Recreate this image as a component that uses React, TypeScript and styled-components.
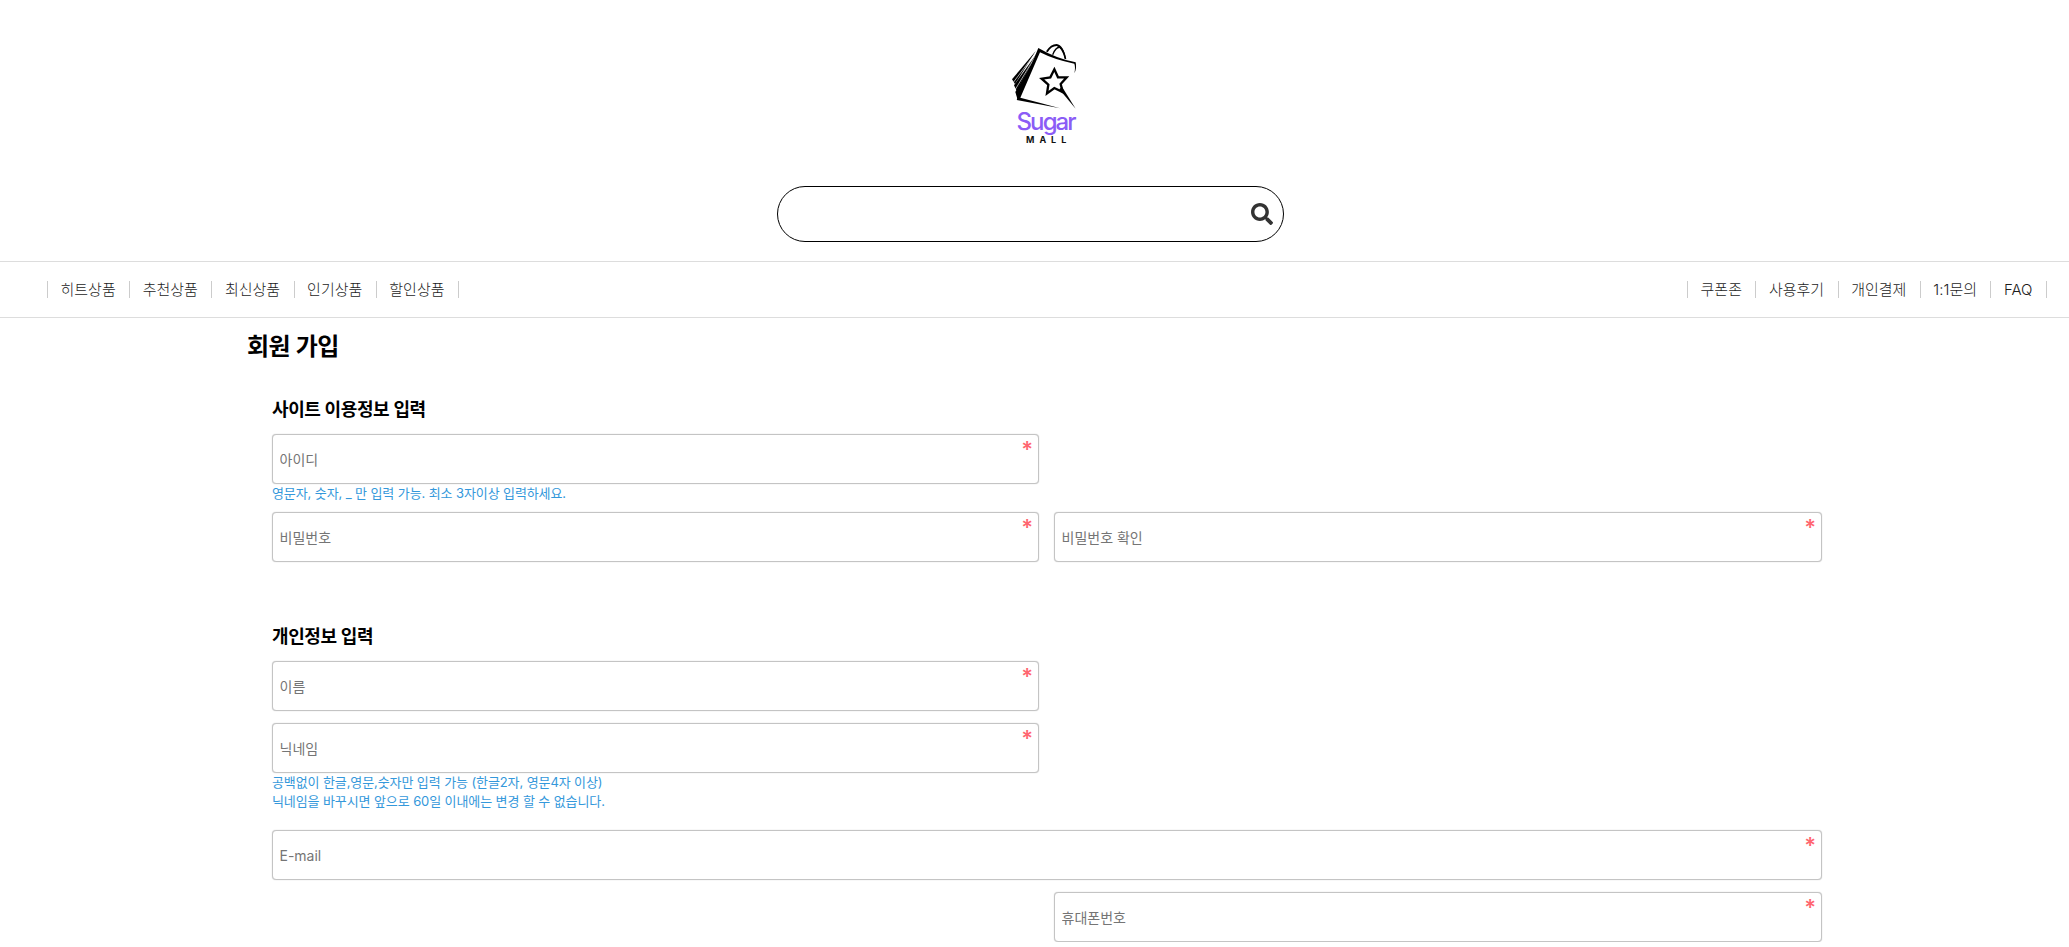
import styled, { createGlobalStyle } from "styled-components";
import { FaSearch } from "react-icons/fa";

const GlobalStyle = createGlobalStyle`
  html, body {
    margin: 0;
    padding: 0;
    background: #fff;
    font-family: "Inter", "Noto Sans CJK KR", sans-serif;
    color: #333;
  }
  * {
    box-sizing: border-box;
  }
`;

const Header = styled.header`
  padding-top: 38px;
  display: flex;
  flex-direction: column;
  align-items: center;
`;

const LogoImage = styled.svg`
  display: block;
  width: 121px;
  height: 110px;
`;

const SearchBox = styled.div`
  width: 507px;
  height: 56px;
  margin: 38px 8px 19px 0;
  padding: 0 10px 0 20px;
  border: 1px solid #000;
  border-radius: 28px;
  display: flex;
  align-items: center;
`;

const SearchInput = styled.input`
  flex: 1;
  min-width: 0;
  height: 100%;
  border: none;
  outline: none;
  font: inherit;
  background: transparent;
`;

const SearchButton = styled.button`
  padding: 0;
  border: none;
  background: none;
  color: #333;
  display: flex;
  cursor: pointer;
`;

const Nav = styled.nav`
  height: 57px;
  padding: 0 22px 0 47px;
  border-top: 1px solid #ddd;
  border-bottom: 1px solid #ddd;
  display: flex;
  justify-content: space-between;
  align-items: center;
`;

const NavGroup = styled.ul`
  margin: 0;
  padding: 0;
  list-style: none;
  display: flex;
  border-left: 1px solid #ccc;
`;

const NavItem = styled.li`
  height: 17px;
  padding: 0 13.5px 0 12.5px;
  border-right: 1px solid #ccc;
  font-size: 15px;
  font-weight: 300;
  line-height: 17px;
  color: #1c1c1c;
  white-space: nowrap;
`;

const Main = styled.main`
  width: 1575px;
  margin: 0 auto;
  padding-top: 11px;
`;

const Title = styled.h1`
  margin: 0 0 32px;
  font-size: 24px;
  line-height: 36px;
  font-weight: 600;
  letter-spacing: -0.5px;
  color: #000;
`;

const Section = styled.section<{ $gap?: number }>`
  padding-left: 25px;
  margin-bottom: ${(p) => p.$gap ?? 0}px;
`;

const SectionTitle = styled.h2`
  margin: 0 0 12px;
  padding-top: 1px;
  font-size: 18px;
  line-height: 24px;
  font-weight: 600;
  letter-spacing: -0.4px;
  color: #000;
`;

const FormGrid = styled.div`
  display: grid;
  grid-template-columns: 767px 1fr;
  column-gap: 15px;
`;

const Field = styled.div<{ $wide?: boolean; $second?: boolean; $gap?: number }>`
  position: relative;
  grid-column: ${(p) => (p.$wide ? "1 / span 2" : p.$second ? "2" : "auto")};
  margin-bottom: ${(p) => p.$gap ?? 12}px;
`;

const TextInput = styled.input`
  display: block;
  width: 100%;
  height: 50px;
  padding: 0 6px 0 6.5px;
  border: 1px solid #c4c4c4;
  border-radius: 4px;
  box-shadow: 0 0 1px #bbb;
  outline: none;
  font-family: inherit;
  font-size: 14px;
  color: #333;

  &::placeholder {
    color: #757575;
    opacity: 1;
  }
`;

const RequiredMark = styled.span`
  position: absolute;
  top: 4px;
  right: 6px;
  font-size: 22px;
  font-weight: 600;
  line-height: 22px;
  color: #ff6670;
`;

const Hint = styled.div`
  font-size: 13px;
  line-height: 19px;
  letter-spacing: -0.1px;
  color: #3498db;
`;

const Logo = () => (
  <LogoImage viewBox="0 0 121 110">
    {/* paths are in 3x crop coordinates of the bag, hence the scale */}
    <g transform="translate(-14 -18) scale(0.33333)">
      <path d="M228 92 L156 178 L165 192 Z" fill="#000" />
      <path d="M232 98 L162 196 L170 212 Z" fill="#000" />
      <path d="M238 90 L166 216 L173 240 Z" fill="#000" />
      <path d="M233 90 L161 186 M236 92 L166 208" stroke="#fff" strokeWidth="2" />
      <path
        d="M235 84 Q290 116 347 127 Q351 145 343 160 Q347 142 343 131 Q285 120 240 97 L181 233 Q240 248 300 265 Q235 252 170 240 Z"
        fill="#000"
      />
      <path
        d="M258 94 Q272 72 290 72 Q310 74 319 118 L314 116 Q306 84 290 78 Q274 78 263 97 Z"
        fill="#000"
      />
      <path
        d="M278 104 Q288 80 300 82 Q312 90 316 116"
        fill="none"
        stroke="#000"
        strokeWidth="4"
      />
      <path
        d="M283 148 L294 172 L320 172 L302 192 L308 216 L283 204 L261 220 L265 194 L245 176 L271 172 Z"
        fill="none"
        stroke="#000"
        strokeWidth="7"
        strokeLinejoin="miter"
      />
      <path d="M298 208 L306 200 L347 266 Z" fill="#000" />
    </g>
    <text
      x="42.5"
      y="92"
      fontFamily="Inter, sans-serif"
      fontSize="24"
      fontWeight="500"
      letterSpacing="-1.9"
      fill="#8b5cf6"
    >
      Sugar
    </text>
    <text
      x="52"
      y="105"
      fontFamily="Inter, sans-serif"
      fontSize="9"
      fontWeight="700"
      letterSpacing="5"
      fill="#111"
    >
      MALL
    </text>
  </LogoImage>
);

const LEFT_MENU = ["히트상품", "추천상품", "최신상품", "인기상품", "할인상품"];
const RIGHT_MENU = ["쿠폰존", "사용후기", "개인결제", "1:1문의", "FAQ"];

const App = () => {
  return (
    <>
      <GlobalStyle />
      <Header>
        <Logo />
        <SearchBox>
          <SearchInput type="text" />
          <SearchButton type="button">
            <FaSearch size={22} />
          </SearchButton>
        </SearchBox>
      </Header>
      <Nav>
        <NavGroup>
          {LEFT_MENU.map((item) => (
            <NavItem key={item}>{item}</NavItem>
          ))}
        </NavGroup>
        <NavGroup>
          {RIGHT_MENU.map((item) => (
            <NavItem key={item}>{item}</NavItem>
          ))}
        </NavGroup>
      </Nav>
      <Main>
        <Title>회원 가입</Title>
        <Section $gap={62}>
          <SectionTitle>사이트 이용정보 입력</SectionTitle>
          <FormGrid>
            <Field $gap={0}>
              <TextInput placeholder="아이디" />
              <RequiredMark>*</RequiredMark>
            </Field>
            <Field $wide $gap={9}>
              <Hint>영문자, 숫자, _ 만 입력 가능. 최소 3자이상 입력하세요.</Hint>
            </Field>
            <Field $gap={0}>
              <TextInput type="text" placeholder="비밀번호" />
              <RequiredMark>*</RequiredMark>
            </Field>
            <Field $gap={0}>
              <TextInput type="text" placeholder="비밀번호 확인" />
              <RequiredMark>*</RequiredMark>
            </Field>
          </FormGrid>
        </Section>
        <Section>
          <SectionTitle>개인정보 입력</SectionTitle>
          <FormGrid>
            <Field>
              <TextInput placeholder="이름" />
              <RequiredMark>*</RequiredMark>
            </Field>
            <Field />
            <Field $gap={0}>
              <TextInput placeholder="닉네임" />
              <RequiredMark>*</RequiredMark>
            </Field>
            <Field $wide $gap={19}>
              <Hint>공백없이 한글,영문,숫자만 입력 가능 (한글2자, 영문4자 이상)</Hint>
              <Hint>닉네임을 바꾸시면 앞으로 60일 이내에는 변경 할 수 없습니다.</Hint>
            </Field>
            <Field $wide>
              <TextInput placeholder="E-mail" />
              <RequiredMark>*</RequiredMark>
            </Field>
            <Field $second $gap={0}>
              <TextInput placeholder="휴대폰번호" />
              <RequiredMark>*</RequiredMark>
            </Field>
          </FormGrid>
        </Section>
      </Main>
    </>
  );
};

export default App;
